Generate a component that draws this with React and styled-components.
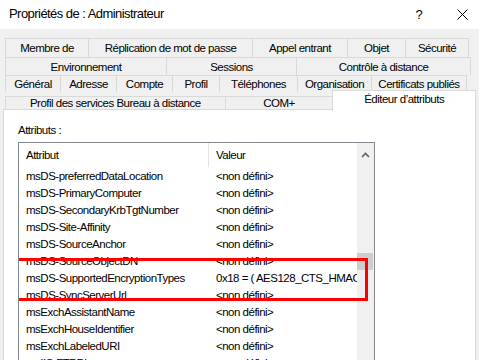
import styled, { createGlobalStyle } from 'styled-components';

const GlobalStyle = createGlobalStyle`
  html, body {
    margin: 0;
    padding: 0;
    background: #f0f0f0;
    overflow: hidden;
  }
  body {
    font-family: 'Liberation Sans', Arial, sans-serif;
    font-size: 11.5px;
    color: #000;
  }
`;

const tabRows = [
  {
    height: 19,
    tabs: [
      ['Membre de', 84],
      ['Réplication de mot de passe', 165],
      ['Appel entrant', 96],
      ['Objet', 59],
      ['Sécurité', 64]
    ]
  },
  {
    height: 18,
    tabs: [
      ['Environnement', 162],
      ['Sessions', 131],
      ['Contrôle à distance', 175]
    ]
  },
  {
    height: 17,
    tabs: [
      ['Général', 56],
      ['Adresse', 57],
      ['Compte', 57],
      ['Profil', 48],
      ['Téléphones', 79],
      ['Organisation', 75],
      ['Certificats publiés', 96]
    ]
  }
];

const rows = [
  ['msDS-preferredDataLocation', '<non défini>'],
  ['msDS-PrimaryComputer', '<non défini>'],
  ['msDS-SecondaryKrbTgtNumber', '<non défini>'],
  ['msDS-Site-Affinity', '<non défini>'],
  ['msDS-SourceAnchor', '<non défini>'],
  ['msDS-SourceObjectDN', '<non défini>'],
  ['msDS-SupportedEncryptionTypes', '0x18 = ( AES128_CTS_HMAC_SHA1_96 | AES256_CTS_HMAC_SHA1_96 )'],
  ['msDS-SyncServerUrl', '<non défini>'],
  ['msExchAssistantName', '<non défini>'],
  ['msExchHouseIdentifier', '<non défini>'],
  ['msExchLabeledURI', '<non défini>'],
  ['msIIS-FTPDir', '<non défini>']
];

const Dialog = styled.div`
  width: 479px;
  height: 360px;
  overflow: hidden;
  display: flex;
  flex-direction: column;
  background: #f0f0f0;
`;

const TitleBar = styled.div`
  height: 29px;
  flex: none;
  background: #fff;
  display: flex;
  align-items: center;
  padding: 0 0 0 9px;
`;

const Title = styled.div`
  flex: 1;
  font-size: 13px;
  letter-spacing: -0.55px;
  color: #000;
  margin-top: -2px;
`;

const TitleButton = styled.div`
  width: ${(p) => p.$w}px;
  margin-right: ${(p) => p.$mr || 0}px;
  height: 29px;
  display: flex;
  align-items: center;
  justify-content: center;
  font-size: 13px;
  color: #000;
`;

const TabArea = styled.div`
  padding: 9px 3px 0 5px;
  flex: none;
`;

const TabRow = styled.div`
  display: flex;
  height: ${(p) => p.$h}px;
`;

const Tab = styled.div`
  width: ${(p) => p.$w}px;
  box-sizing: border-box;
  border: 1px solid #d9d9d9;
  border-bottom: none;
  margin-left: -1px;
  &:first-child {
    margin-left: 0;
  }
  background: #f0f0f0;
  display: flex;
  align-items: center;
  justify-content: center;
  white-space: nowrap;
  letter-spacing: -0.5px;
`;

const LastRow = styled.div`
  display: flex;
  align-items: flex-end;
  height: 17px;
`;

const ActiveTab = styled.div`
  width: 144px;
  height: 21px;
  box-sizing: border-box;
  margin-left: -1px;
  margin-bottom: -2px;
  border: 1px solid #d9d9d9;
  border-bottom: none;
  background: #fff;
  position: relative;
  z-index: 1;
  display: flex;
  justify-content: center;
  padding-top: 2px;
  white-space: nowrap;
  letter-spacing: -0.5px;
`;

const Panel = styled.div`
  flex: 1;
  margin: 0 3px 0 3px;
  background: #fff;
  border: 1px solid #d9d9d9;
  padding: 12px 0 0 14px;
`;

const Label = styled.div`
  height: 20px;
  line-height: 16px;
  letter-spacing: -0.5px;
`;

const ListBox = styled.div`
  position: relative;
  width: 357px;
  height: 240px;
  box-sizing: border-box;
  border: 1px solid #828790;
  display: flex;
  overflow: hidden;
`;

const ListContent = styled.div`
  flex: 1;
  min-width: 0;
  overflow: hidden;
`;

const HeaderRow = styled.div`
  display: flex;
  height: 24px;
  align-items: center;
`;

const HeaderCell = styled.div`
  width: ${(p) => p.$w}px;
  flex: none;
  box-sizing: border-box;
  padding-left: 7px;
  height: 100%;
  display: flex;
  align-items: center;
  border-right: ${(p) => (p.$sep ? '1px solid #e5e5e5' : 'none')};
  letter-spacing: -0.5px;
`;

const Row = styled.div`
  display: flex;
  height: 17px;
  align-items: center;
  white-space: nowrap;
`;

const Cell = styled.div`
  width: ${(p) => (p.$w ? `${p.$w}px` : 'auto')};
  flex: ${(p) => (p.$w ? 'none' : '1')};
  box-sizing: border-box;
  padding-left: 7px;
  overflow: hidden;
  letter-spacing: -0.5px;
`;

const ScrollBar = styled.div`
  width: 17px;
  flex: none;
  background: #f0f0f0;
  position: relative;
`;

const ScrollArrow = styled.div`
  height: 17px;
  display: flex;
  align-items: center;
  justify-content: center;
  padding-top: 3px;
`;

const Thumb = styled.div`
  position: absolute;
  left: 0;
  right: 1px;
  top: 110px;
  height: 17px;
  background: #cdcdcd;
`;

const Highlight = styled.div`
  position: absolute;
  left: -5px;
  top: 115px;
  width: 348px;
  height: 37px;
  border: 3px solid #ff0000;
  pointer-events: none;
`;

export default function App() {
  return (
    <Dialog>
      <GlobalStyle />
      <TitleBar>
        <Title>Propriétés de : Administrateur</Title>
        <TitleButton $w={40} $mr={6}>?</TitleButton>
        <TitleButton $w={34}>
          <svg width="11" height="11" viewBox="0 0 11 11">
            <path d="M0.5 0.5 L10.5 10.5 M10.5 0.5 L0.5 10.5" stroke="#000" strokeWidth="1" />
          </svg>
        </TitleButton>
      </TitleBar>
      <TabArea>
        {tabRows.map((r, i) => (
          <TabRow key={i} $h={r.height}>
            {r.tabs.map(([t, w]) => (
              <Tab key={t} $w={w}>
                {t}
              </Tab>
            ))}
          </TabRow>
        ))}
        <LastRow>
          <Tab $w={221}>Profil des services Bureau à distance</Tab>
          <Tab $w={109}>COM+</Tab>
          <ActiveTab>Éditeur d’attributs</ActiveTab>
        </LastRow>
      </TabArea>
      <Panel>
        <Label>Attributs :</Label>
        <ListBox>
          <ListContent>
            <HeaderRow>
              <HeaderCell $w={190} $sep>Attribut</HeaderCell>
              <HeaderCell $w={150}>Valeur</HeaderCell>
            </HeaderRow>
            {rows.map(([a, v]) => (
              <Row key={a}>
                <Cell $w={190}>{a}</Cell>
                <Cell>{v}</Cell>
              </Row>
            ))}
          </ListContent>
          <ScrollBar>
            <ScrollArrow>
              <svg width="9" height="6" viewBox="0 0 9 6">
                <path d="M1 5 L4.5 1.5 L8 5" stroke="#606060" strokeWidth="1.6" fill="none" />
              </svg>
            </ScrollArrow>
            <Thumb />
          </ScrollBar>
          <Highlight />
        </ListBox>
      </Panel>
    </Dialog>
  );
}
